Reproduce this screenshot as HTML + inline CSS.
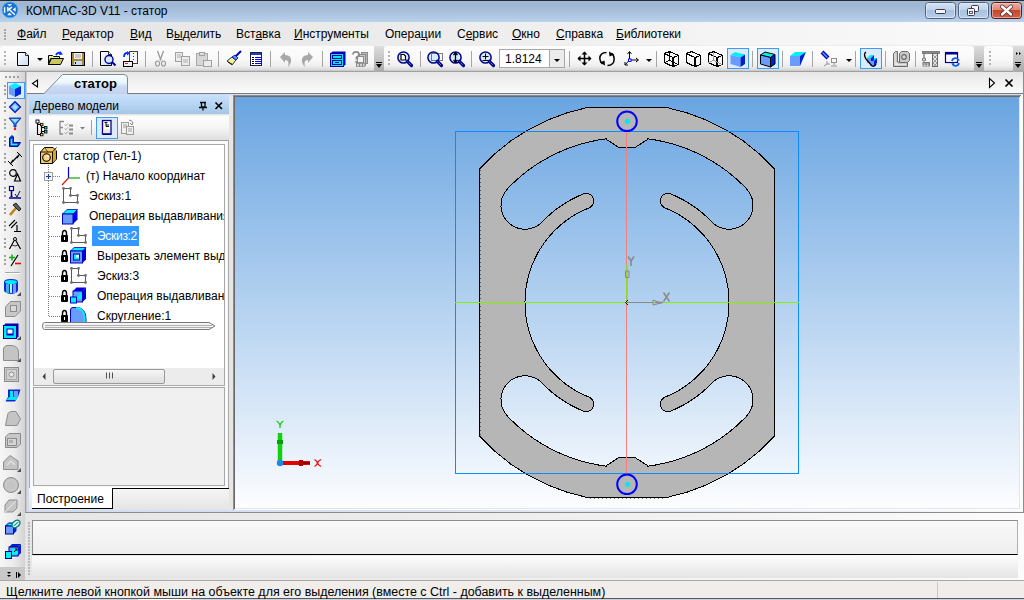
<!DOCTYPE html><html><head><meta charset="utf-8"><style>
*{margin:0;padding:0;box-sizing:border-box}
html,body{width:1024px;height:600px;overflow:hidden;background:#f0f0f0;font-family:"Liberation Sans",sans-serif;font-size:12px;color:#000}
.a{position:absolute}
.t{position:absolute;white-space:nowrap;line-height:14px}
.u{text-decoration:underline;text-underline-offset:1px}
.tb{position:absolute;top:46px;height:25px;border-radius:4px 4px 0 0;background:linear-gradient(#fdfdfd,#f9f9f9 50%,#eeeeee 80%,#d8d8d8 96%,#c0c0c0)}
.sep{position:absolute;top:51px;width:2px;height:17px;border-left:1px solid #a8a8a8;border-right:1px solid #fff}
svg{position:absolute;overflow:visible}
</style></head><body>
<div class="a" style="left:0;top:0;width:1024px;height:22px;background:linear-gradient(#2b2b2b 0,#2b2b2b 1px,#a2bad7 1px,#9db6d4 5px,#a9c1dd 12px,#b8d0ea 21px,#bcd3ec 22px)"></div>
<div class="t" style="left:26px;top:4px;font-size:12px;color:#000">КОМПАС-3D V11 - статор</div>
<svg style="left:0;top:0" width="1024" height="22"><defs><linearGradient id="wb" x1="0" y1="0" x2="0" y2="1"><stop offset="0" stop-color="#d4e3f4"/><stop offset=".45" stop-color="#c0d4ec"/><stop offset=".5" stop-color="#a9c1de"/><stop offset="1" stop-color="#b9cfe8"/></linearGradient><linearGradient id="wc" x1="0" y1="0" x2="0" y2="1"><stop offset="0" stop-color="#eab0a4"/><stop offset=".45" stop-color="#dc8876"/><stop offset=".5" stop-color="#c8452c"/><stop offset="1" stop-color="#d0674f"/></linearGradient><radialGradient id="lg" cx=".4" cy=".35" r=".7"><stop offset="0" stop-color="#7cc0f4"/><stop offset="1" stop-color="#1a66c4"/></radialGradient></defs><circle cx="10" cy="9.9" r="7.9" fill="#1a72d0" stroke="#40b0f0" stroke-width=".8"/><path d="M7.2,4.3 H12.2 L9.7,6.2z M12.8,9.4 L15.6,7.2 V11.8z M7.2,15.2 H11.9 L9.5,12.6z" fill="#fff"/><path d="M4.6,7.3 V12.8 M7.8,7 V11.6 M8.4,9.6 L12,7.2 M9.3,9.6 L14.8,14.8" stroke="#fff" stroke-width="1.4" fill="none"/><rect x="925.5" y="2.5" width="30" height="16" rx="3" fill="url(#wb)" stroke="#52627a"/><rect x="926.5" y="3.5" width="28" height="14" rx="2" fill="none" stroke="#e6eef8" stroke-opacity=".7"/><rect x="935.5" y="9.5" width="10" height="4" rx="1" fill="#f4f4f4" stroke="#3a3a4a"/><rect x="958.5" y="2.5" width="30" height="16" rx="3" fill="url(#wb)" stroke="#52627a"/><rect x="959.5" y="3.5" width="28" height="14" rx="2" fill="none" stroke="#e6eef8" stroke-opacity=".7"/><rect x="971.5" y="5.5" width="7" height="6" rx="1" fill="#f4f4f4" stroke="#3a3a4a"/><rect x="967.5" y="8.5" width="7" height="7" rx="1" fill="#f4f4f4" stroke="#3a3a4a"/><rect x="969.5" y="11.5" width="3" height="2" fill="none" stroke="#3a3a4a" stroke-width=".8"/><rect x="991.5" y="2.5" width="30" height="16" rx="3" fill="url(#wc)" stroke="#5a1a1a"/><rect x="992.5" y="3.5" width="28" height="14" rx="2" fill="none" stroke="#f4d0c8" stroke-opacity=".6"/><path d="M1002,6.5 L1011,14.5 M1011,6.5 L1002,14.5" stroke="#4a3030" stroke-width="4" stroke-linecap="round"/><path d="M1002,6.5 L1011,14.5 M1011,6.5 L1002,14.5" stroke="#fff" stroke-width="2.4" stroke-linecap="round"/></svg>
<div class="a" style="left:0;top:22px;width:1024px;height:23px;background:linear-gradient(90deg,#e5e5e5,#ececec 40%,#f6f6f6 80%,#fafafa)"></div>
<svg style="left:0;top:0" width="20" height="45"><rect x="4" y="29" width="2" height="2" fill="#a8a8a8"/><rect x="4" y="32" width="2" height="2" fill="#a8a8a8"/><rect x="4" y="35" width="2" height="2" fill="#a8a8a8"/><rect x="4" y="38" width="2" height="2" fill="#a8a8a8"/></svg>
<div class="t" style="left:17px;top:27px"><span class="u">Ф</span>айл</div>
<div class="t" style="left:62px;top:27px"><span class="u">Р</span>едактор</div>
<div class="t" style="left:130px;top:27px"><span class="u">В</span>ид</div>
<div class="t" style="left:166px;top:27px">В<span class="u">ы</span>делить</div>
<div class="t" style="left:236px;top:27px">Вст<span class="u">а</span>вка</div>
<div class="t" style="left:294px;top:27px"><span class="u">И</span>нструменты</div>
<div class="t" style="left:385px;top:27px">Опера<span class="u">ц</span>ии</div>
<div class="t" style="left:457px;top:27px">С<span class="u">е</span>рвис</div>
<div class="t" style="left:512px;top:27px"><span class="u">О</span>кно</div>
<div class="t" style="left:556px;top:27px"><span class="u">С</span>правка</div>
<div class="t" style="left:616px;top:27px"><span class="u">Б</span>иблиотеки</div>
<div class="a" style="left:0;top:45px;width:1024px;height:27px;background:#ededed"></div>
<div class="tb" style="left:0;width:384px"></div>
<div class="tb" style="left:384px;width:590px"></div>
<div class="tb" style="left:984px;width:29px"></div>
<div class="a" style="left:0;top:71px;width:1024px;height:1px;background:#a0a0a0"></div>
<svg style="left:0;top:0" width="1024" height="80"><defs><linearGradient id="chev" x1="0" y1="0" x2="0" y2="1"><stop offset="0" stop-color="#dedede"/><stop offset="1" stop-color="#a9a9a9"/></linearGradient><linearGradient id="pg" x1="0" y1="0" x2="1" y2="1"><stop offset="0" stop-color="#ffffff"/><stop offset="1" stop-color="#c8dcf4"/></linearGradient></defs><rect x="4" y="51" width="2" height="2" fill="#b4b4b4"/><rect x="4" y="55" width="2" height="2" fill="#b4b4b4"/><rect x="4" y="59" width="2" height="2" fill="#b4b4b4"/><rect x="4" y="63" width="2" height="2" fill="#b4b4b4"/><g transform="translate(17,52)"><path d="M0.5,0.5 H8.5 L11.5,3.5 V13.5 H0.5Z" fill="url(#pg)" stroke="#000"/><path d="M8.5,0.5 V3.5 H11.5" fill="#fff" stroke="#000" stroke-width=".8"/></g><path d="M37,58 h6 l-3,3z" fill="#000"/><g transform="translate(48,51)"><path d="M0.5,4.5 h4 l1,1 h6 v2 h-9 l-2,6z" fill="#e8e8b0" stroke="#000"/><path d="M0.5,13.5 L3.5,7.5 H15.5 L12.5,13.5Z" fill="#c8c860" stroke="#000"/><path d="M8,4 Q10,0.5 13,2.5" fill="none" stroke="#0030ff" stroke-width="1.8"/><path d="M12,0 L15,3.5 L11,4z" fill="#0030ff"/></g><g transform="translate(71,52)"><rect x="0.5" y="0.5" width="13" height="13" fill="#a88838" stroke="#000"/><rect x="3" y="1" width="8" height="6" fill="#f2f2f2"/><path d="M4,3h6M4,5h6" stroke="#a0a0a0"/><rect x="3" y="9" width="8" height="4" fill="#c8dcf0"/><rect x="4" y="10" width="1" height="2" fill="#000"/></g><rect x="92" y="51" width="1" height="16" fill="#a6a6a6"/><g transform="translate(100,51)"><path d="M0.5,0.5 H8.5 L11.5,3.5 V14.5 H0.5Z" fill="url(#pg)" stroke="#000"/><path d="M8.5,0.5 V3.5 H11.5" fill="#fff" stroke="#000" stroke-width=".8"/><path d="M11.5,10.5 L15.5,14.5" stroke="#000090" stroke-width="2"/><circle cx="9" cy="8.5" r="4" fill="#d6ecfb" stroke="#000090" stroke-width="1.4"/></g><g transform="translate(122,51)"><rect x="7.5" y="0.5" width="8" height="12" fill="#f4f4f4" stroke="#404040"/><path d="M11.5,2v9" stroke="#404040" stroke-dasharray="1,2"/><path d="M2,6 Q2,1.5 6,2" fill="none" stroke="#0030ff" stroke-width="1.8"/><path d="M5,0 L8,2.2 L5,4.5z" fill="#0030ff"/><rect x="1.5" y="10.5" width="9" height="5" fill="#f0f0f0" stroke="#000"/><rect x="3" y="12" width="3" height="1" fill="#f02020"/></g><rect x="145" y="51" width="1" height="16" fill="#a6a6a6"/><g transform="translate(155,51)"><path d="M2.5,0 L6,9.5 M8.5,0 L5,9.5" stroke="#9a9a9a" stroke-width="1.3"/><ellipse cx="2.5" cy="12.5" rx="2" ry="2.5" fill="none" stroke="#9a9a9a" stroke-width="1.2"/><ellipse cx="8.5" cy="12.5" rx="2" ry="2.5" fill="none" stroke="#9a9a9a" stroke-width="1.2"/></g><g transform="translate(175,52)"><rect x="0.5" y="0.5" width="7" height="9" fill="#ececec" stroke="#a0a0a0"/><rect x="6.5" y="4.5" width="8" height="9" fill="#ececec" stroke="#a0a0a0"/><path d="M8,8h5M8,10h5M2,3h4M2,5h4" stroke="#b0b0b0"/></g><g transform="translate(196,52)"><rect x="0.5" y="1.5" width="11" height="12" fill="#d6d6d6" stroke="#a8a8a8"/><rect x="3.5" y="0.5" width="5" height="3" fill="#e0e0e0" stroke="#a0a0a0"/><rect x="7.5" y="8.5" width="8" height="6" fill="#ececec" stroke="#a0a0a0"/></g><rect x="218" y="51" width="1" height="16" fill="#a6a6a6"/><g transform="translate(226,51)"><path d="M9,6 L15,0" stroke="#0000c0" stroke-width="2"/><path d="M1,10 L6,6 L10,9 L6,14z" fill="#f4f0a0" stroke="#000" stroke-width=".8"/><path d="M6,6 L9,4 L12,7 L10,9z" fill="#40a0f0" stroke="#0000a0" stroke-width=".8"/><path d="M2,11 L6,13" stroke="#000" stroke-width=".8"/></g><g transform="translate(250,52)"><rect x="0.5" y="0.5" width="11" height="13" fill="#fff" stroke="#202040"/><rect x="1" y="1" width="10" height="2" fill="#1a40c0"/><path d="M2,5.5h2M2,7.5h2M2,9.5h2M2,11.5h2" stroke="#000"/><path d="M5,5.5h6M5,7.5h6M5,9.5h6M5,11.5h6" stroke="#0000f0"/></g><rect x="270" y="51" width="1" height="16" fill="#a6a6a6"/><g transform="translate(280,52)"><path d="M0,5 L5,0 V3 Q12,3 11,10 Q10,13 8,15 Q10,8 5,8 V11z" fill="#a8a8a8"/></g><g transform="translate(300,52)"><path d="M13,5 L8,0 V3 Q1,3 2,10 Q3,13 5,15 Q3,8 8,8 V11z" fill="#a8a8a8"/></g><rect x="322" y="51" width="1" height="16" fill="#a6a6a6"/><g transform="translate(330,51)"><path d="M0.5,2.5 L2.5,0.5 H15.5 V13.5 L13.5,15.5 H0.5Z" fill="#0000c8"/><rect x="0.5" y="2.5" width="13" height="13" fill="#00e8f8" stroke="#0000a0"/><rect x="2.5" y="4.5" width="9" height="3" fill="#00e8f8" stroke="#0000a0"/><rect x="2.5" y="9.5" width="9" height="4" fill="#00e8f8" stroke="#0000a0"/><rect x="5" y="11" width="4" height="1" fill="#0000a0"/></g><g transform="translate(352,51)"><rect x="9.5" y="1.5" width="6" height="11" fill="#b8b8b8" stroke="#8c8c8c"/><rect x="7.5" y="3.5" width="6" height="11" fill="#c8c8c8" stroke="#8c8c8c"/><rect x="5.5" y="5.5" width="6" height="6" fill="#f4f4f4" stroke="#8c8c8c"/><path d="M1,3.5 Q1,0.8 4,0.8 Q7,0.8 7,3.3 Q7,5.3 4.5,6.3 V8.5" fill="none" stroke="#8c8c8c" stroke-width="1.8"/><circle cx="4.5" cy="11" r="1.3" fill="#8c8c8c"/><rect x="4" y="12" width="9" height="4" fill="#8c8c8c"/><path d="M5,13.3 h2 M8,13.3 h2 M11,13.3 h1.5 M5,14.8 h2 M8,14.8 h2 M11,14.8 h1.5" stroke="#f0f0f0" stroke-width=".9"/></g><rect x="374" y="46" width="10" height="26" fill="url(#chev)"/><rect x="376" y="62" width="6" height="1" fill="#000"/><path d="M376,64 h6 l-3,4z" fill="#000"/><rect x="388" y="51" width="2" height="2" fill="#b4b4b4"/><rect x="388" y="55" width="2" height="2" fill="#b4b4b4"/><rect x="388" y="59" width="2" height="2" fill="#b4b4b4"/><rect x="388" y="63" width="2" height="2" fill="#b4b4b4"/><g transform="translate(397,51)"><circle cx="6.5" cy="6.5" r="5.6" fill="#d6ecfb" stroke="#00008a" stroke-width="1.5"/><path d="M4,3.5 H7 L8.5,5 V9 H4Z" fill="#fff" stroke="#000" stroke-width="1.2"/><path d="M10.3,10.3 L14.5,14.5" stroke="#00008a" stroke-width="3.2" stroke-linecap="round"/><path d="M10.6,10.6 L14.2,14.2" stroke="#8aa0d8" stroke-width="1" stroke-dasharray="1,1"/></g><rect x="420" y="51" width="1" height="16" fill="#a6a6a6"/><g transform="translate(427,51)"><circle cx="6.5" cy="6.5" r="5.6" fill="#d6ecfb" stroke="#00008a" stroke-width="1.5"/><rect x="4.5" y="2.5" width="11" height="7" fill="none" stroke="#000" stroke-dasharray="1,1"/><path d="M10.3,10.3 L14.5,14.5" stroke="#00008a" stroke-width="3.2" stroke-linecap="round"/><path d="M10.6,10.6 L14.2,14.2" stroke="#8aa0d8" stroke-width="1" stroke-dasharray="1,1"/></g><g transform="translate(449,51)"><circle cx="6.5" cy="6.5" r="5.6" fill="#d6ecfb" stroke="#00008a" stroke-width="1.5"/><path d="M6.5,2 V11 M4.5,4 L6.5,1.8 L8.5,4 M4.5,9 L6.5,11.2 L8.5,9" fill="none" stroke="#000" stroke-width="1.3"/><path d="M10.3,10.3 L14.5,14.5" stroke="#00008a" stroke-width="3.2" stroke-linecap="round"/><path d="M10.6,10.6 L14.2,14.2" stroke="#8aa0d8" stroke-width="1" stroke-dasharray="1,1"/></g><rect x="471" y="51" width="1" height="16" fill="#a6a6a6"/><g transform="translate(479,51)"><circle cx="6.5" cy="6.5" r="5.6" fill="#d6ecfb" stroke="#00008a" stroke-width="1.5"/><path d="M3.5,5.5 H9.5 M6.5,2.5 V8.5 M3.5,9.5 H9.5" stroke="#000" stroke-width="1.1"/><path d="M10.3,10.3 L14.5,14.5" stroke="#00008a" stroke-width="3.2" stroke-linecap="round"/><path d="M10.6,10.6 L14.2,14.2" stroke="#8aa0d8" stroke-width="1" stroke-dasharray="1,1"/></g><rect x="499.5" y="49.5" width="65" height="18" fill="#fff" stroke="#a8a8a8"/><rect x="549.5" y="49.5" width="15" height="18" fill="#ececec" stroke="#a8a8a8"/><path d="M554,59 h6 l-3,3z" fill="#000"/><rect x="569" y="51" width="1" height="16" fill="#a6a6a6"/><g transform="translate(577,51)"><path d="M7.5,1 V14 M1,7.5 H14" stroke="#000" stroke-width="1.5"/><path d="M4.5,3.5 L7.5,0.5 L10.5,3.5z M4.5,11.5 L7.5,14.5 L10.5,11.5z M3.5,4.5 L0.5,7.5 L3.5,10.5z M11.5,4.5 L14.5,7.5 L11.5,10.5z" fill="#000"/></g><g transform="translate(599,51)"><path d="M7.5,1.5 Q1,1.5 0.8,7.5 Q1,11 3.5,13" fill="none" stroke="#000" stroke-width="1.5"/><path d="M0.8,11.5 L6,14.5 L5.5,9.5z" fill="#000"/><path d="M8.5,14.5 Q15,14.5 15.2,8 Q15,4 12.5,2.5" fill="none" stroke="#000" stroke-width="1.5"/><path d="M15.2,3.5 L10,0.5 L10.5,5.5z" fill="#000"/></g><g transform="translate(624,51)"><path d="M5.5,9 V1 M5.5,9 H14 M5.5,9 L1,14" stroke="#000" stroke-width="1"/><path d="M3.5,3 L5.5,0.5 L7.5,3 M12,7 L14.5,9 L12,11 M1,11 V14 H4" fill="none" stroke="#000"/><rect x="4.5" y="8" width="2.5" height="2.5" fill="#fff" stroke="#0000f0" stroke-width=".9"/></g><path d="M646,59 h6 l-3,3z" fill="#000"/><rect x="656" y="51" width="1" height="16" fill="#a6a6a6"/><g transform="translate(664,51)"><g shape-rendering="crispEdges"><path d="M0.5,2.5 L5.5,0.5 L14.5,4.5 V13.5 L9,15.5 L0.5,11.5Z" fill="none" stroke="#000" stroke-width="1.2"/><path d="M0.5,2.5 L9,6.5 L14.5,4.5 M9,6.5 V15.5" fill="none" stroke="#000" stroke-width="1.2"/><path d="M5.5,0.5 V9.5 L0.5,11.5 M5.5,9.5 L14.5,13.5" fill="none" stroke="#000" stroke-width="1"/></g></g><g transform="translate(686,51)"><g shape-rendering="crispEdges"><path d="M0.5,2.5 L5.5,0.5 L14.5,4.5 V13.5 L9,15.5 L0.5,11.5Z" fill="none" stroke="#000" stroke-width="1.2"/><path d="M0.5,2.5 L9,6.5 L14.5,4.5 M9,6.5 V15.5" fill="none" stroke="#000" stroke-width="1.2"/></g></g><g transform="translate(708,51)"><g shape-rendering="crispEdges"><path d="M0.5,2.5 L5.5,0.5 L14.5,4.5 V13.5 L9,15.5 L0.5,11.5Z" fill="none" stroke="#000" stroke-width="1.2"/><path d="M0.5,2.5 L9,6.5 L14.5,4.5 M9,6.5 V15.5" fill="none" stroke="#000" stroke-width="1.2"/><path d="M5.5,0.5 V9.5 L0.5,11.5 M5.5,9.5 L14.5,13.5" fill="none" stroke="#a0a0a0" stroke-width="1"/></g></g><rect x="727.5" y="48.5" width="21" height="20" fill="#dcebfc" stroke="#3d9bf5" stroke-width="1"/><g transform="translate(730,51)"><path d="M0.5,4 L5,1 L15,3.5 L10.5,6.5Z" fill="#00f0f8"/><path d="M0.5,4 L10.5,6.5 V16 L0.5,13Z" fill="#6a9cff"/><path d="M10.5,6.5 L15,3.5 V13 L10.5,16Z" fill="#0020d0"/></g><rect x="752" y="51" width="1" height="16" fill="#a6a6a6"/><rect x="757.5" y="48.5" width="21" height="20" fill="#dcebfc" stroke="#3d9bf5" stroke-width="1"/><g transform="translate(760,51)"><path d="M0.5,4 L5,1 L15,3.5 L10.5,6.5Z" fill="#00f0f8" stroke="#000"/><path d="M0.5,4 L10.5,6.5 V16 L0.5,13Z" fill="#6a9cff" stroke="#000"/><path d="M10.5,6.5 L15,3.5 V13 L10.5,16Z" fill="#0020d0" stroke="#000"/></g><rect x="782" y="51" width="1" height="16" fill="#a6a6a6"/><g transform="translate(790,51)"><path d="M0,5 L5,1 H16 L10,5z" fill="#00f0f8"/><rect x="0" y="5" width="10" height="10" fill="#6a9cff"/><path d="M10,5 L16,1 L10,15z" fill="#0020d0"/></g><rect x="812" y="51" width="1" height="16" fill="#a6a6a6"/><g transform="translate(821,51)"><path d="M1,1 L7,7" stroke="#0000b0" stroke-width="4"/><path d="M1.5,1.5 L6.5,6.5" stroke="#50a0ff" stroke-width="1.5"/><path d="M6,10 V13 L3,15 M6,13 H9" fill="none" stroke="#909090"/><rect x="10.5" y="7.5" width="5" height="4" fill="none" stroke="#909090"/><path d="M13,11.5 V14 M10,15 h6" stroke="#909090"/></g><path d="M846,59 h6 l-3,3z" fill="#000"/><rect x="855" y="51" width="1" height="16" fill="#a6a6a6"/><rect x="860.5" y="48.5" width="21" height="20" fill="#dcebfc" stroke="#3d9bf5" stroke-width="1"/><g transform="translate(863,51)"><path d="M4,7 L7,4 H11 L8,7z M7,10 L10,7 H14 L11,10z" fill="#00f0f8"/><path d="M4,7 H8 V12 H4z" fill="#6a9cff"/><path d="M8,7 L11,4 V9 L8,12z" fill="#0020d0"/><path d="M7,10 H11 V15 H7z" fill="#6a9cff"/><path d="M11,10 L14,7 V12 L11,15z" fill="#0020d0"/><path d="M3,1 Q0,3 3,8 L9,15 Q12,16 13,13" fill="none" stroke="#000" stroke-width="1.3"/></g><rect x="885" y="51" width="1" height="16" fill="#a6a6a6"/><g transform="translate(893,51)"><path d="M0.5,2.5 L2.5,0.5 H4.5 V11 H14.5 V15.5 H0.5z" fill="#c8c8c8" stroke="#6c6c6c"/><path d="M2,2.5 V13.5 H13" fill="none" stroke="#f0f0f0" stroke-width=".8"/><path d="M6.5,2.5 L8.5,0.5 H14.5 L16.5,2.5 V9.5 L14.5,11.5 H6.5z" fill="#c8c8c8" stroke="#6c6c6c"/><circle cx="11" cy="6" r="2.3" fill="#d8d8d8" stroke="#6c6c6c" stroke-width="1.2"/><circle cx="3.5" cy="13" r="1.6" fill="#e8e8e8"/></g><rect x="915" y="51" width="1" height="16" fill="#a6a6a6"/><g transform="translate(922,51)"><rect x="0.5" y="0.5" width="17" height="2" fill="#8a8a8a" stroke="#6c6c6c" stroke-width=".8"/><path d="M2,2.5 V7" stroke="#6c6c6c" stroke-width="1.2"/><circle cx="2" cy="8.5" r="1.5" fill="none" stroke="#6c6c6c" stroke-width="1.1"/><rect x="10.5" y="2.5" width="5" height="13" fill="#e8e8e8" stroke="#6c6c6c"/><path d="M11,4 L15,8 M15,4 L11,8 M11,8 L15,12 M15,8 L11,12 M11,12 L15,15.5 M15,12 L11,15.5" stroke="#7a7a7a" stroke-width=".7"/><rect x="0.5" y="11" width="7.5" height="4.5" fill="#7a7a7a"/><path d="M1.5,13 h2 M4.5,13 h2 M1.5,14.6 h2 M4.5,14.6 h2" stroke="#e8e8e8" stroke-width="1"/></g><g transform="translate(945,51)"><rect x="0.5" y="1.5" width="12" height="10" fill="#fff" stroke="#000090" stroke-width="1.2"/><rect x="0.5" y="1.5" width="12" height="2" fill="#000090"/><path d="M7,10 A3.5,3.5 0 0 1 13.5,9 M14,12 A3.5,3.5 0 0 1 7.5,13" fill="none" stroke="#1060f0" stroke-width="1.8"/><path d="M12,7 L15,9.5 L12,10z M9,15 L6,12.5 L9,12z" fill="#1060f0"/></g><rect x="974" y="46" width="10" height="26" fill="url(#chev)"/><rect x="976" y="62" width="6" height="1" fill="#000"/><path d="M976,64 h6 l-3,4z" fill="#000"/><rect x="989" y="51" width="2" height="2" fill="#b4b4b4"/><rect x="989" y="55" width="2" height="2" fill="#b4b4b4"/><rect x="989" y="59" width="2" height="2" fill="#b4b4b4"/><rect x="989" y="63" width="2" height="2" fill="#b4b4b4"/><rect x="1013" y="46" width="11" height="26" fill="url(#chev)"/><path d="M1016,52 l2,1.5 l-2,1.5z M1019,52 l2,1.5 l-2,1.5z" fill="#000"/><rect x="1015" y="62" width="6" height="1" fill="#000"/><path d="M1015,64 h6 l-3,4z" fill="#000"/></svg>
<div class="t" style="left:505px;top:52px">1.8124</div>
<div class="a" style="left:25px;top:72px;width:999px;height:441px;background:#e8e6e4"></div>
<div class="a" style="left:27px;top:72px;width:996px;height:21px;background:linear-gradient(#e6e6e6,#f2f2f2 55%,#fafafa)"></div>
<div class="a" style="left:27px;top:93px;width:996px;height:1px;background:#7c7c7c"></div>
<div class="a" style="left:27px;top:94px;width:996px;height:1px;background:#d0dcf4"></div>
<div class="a" style="left:25px;top:72px;width:1px;height:508px;background:#a4a4a4"></div>
<div class="a" style="left:26px;top:72px;width:1px;height:508px;background:#c8c8c8"></div>
<div class="a" style="left:27px;top:94px;width:2px;height:418px;background:#cddbf3"></div>
<div class="a" style="left:27px;top:510px;width:994px;height:2px;background:linear-gradient(90deg,#cddbf3,#dde6f4 50%,#f6f8fc)"></div>
<div class="a" style="left:25px;top:512px;width:999px;height:1px;background:#8c8c8c"></div>
<div class="a" style="left:1021px;top:94px;width:2px;height:418px;background:#fafafa"></div>
<div class="a" style="left:1023px;top:72px;width:1px;height:441px;background:#8c8c8c"></div>
<svg style="left:0;top:0" width="1024" height="100"><defs><linearGradient id="tg" x1="0" y1="0" x2="0" y2="1"><stop offset="0" stop-color="#f6fdff"/><stop offset="0.42" stop-color="#eaf6fd"/><stop offset="0.62" stop-color="#cbdaf2"/><stop offset="1" stop-color="#c3d1ee"/></linearGradient></defs><path d="M43.5,94 L62.5,74.5 L124,74.5 Q127.5,74.5 127.5,78 L127.5,94" fill="url(#tg)" stroke="#8a8a8a" stroke-width="1"/></svg>
<div class="t" style="left:74px;top:77px;font-size:13px;font-weight:bold">статор</div>
<svg style="left:0;top:0" width="1024" height="95"><path d="M37.5,80 V87 L32.5,83.5z" fill="#fff" stroke="#000" stroke-width="1.1" stroke-linejoin="miter"/><path d="M989.5,78.5 V87.5 L994.5,83z" fill="#fff" stroke="#000" stroke-width="1.1"/><path d="M1005.5,79.5 L1012.5,86.5 M1012.5,79.5 L1005.5,86.5" stroke="#000" stroke-width="1.7"/></svg>
<div class="a" style="left:29px;top:95px;width:200px;height:19px;background:linear-gradient(#c6e1fc,#b5d3f1 55%,#a7c6e6)"></div>
<div class="t" style="left:33px;top:99px">Дерево модели</div>
<div class="a" style="left:29px;top:114px;width:200px;height:26px;background:linear-gradient(#e4e4e4 0,#e4e4e4 1px,#fefefe 2px,#f6f6f6 50%,#e6e6e6 85%,#dedede)"></div>
<svg style="left:0;top:0" width="240" height="145"><path d="M200,102.5 H206 M201.5,102.5 V107 H205 V102.5 M199,107.5 H207 M203,108 V110.5" fill="none" stroke="#000" stroke-width="1.3"/><path d="M215.5,102.5 L222,109 M222,102.5 L215.5,109" stroke="#000" stroke-width="1.6"/><path d="M37.5,122 V134.5 H41.5 M37.5,124.5 H41.5 M41.5,125 V134 M41.5,127.5 H45 M41.5,131.5 H45" fill="none" stroke="#000" stroke-width="1.1"/><rect x="36" y="120" width="3" height="3" fill="#fff" stroke="#000" stroke-width=".9"/><rect x="40.5" y="123.3" width="2.5" height="2.5" fill="#f0e000" stroke="#000" stroke-width=".8"/><rect x="44.5" y="126.5" width="2.5" height="2.5" fill="#00d8e8" stroke="#000" stroke-width=".8"/><rect x="44.5" y="130.5" width="2.5" height="2.5" fill="#00d8e8" stroke="#000" stroke-width=".8"/><rect x="40.5" y="133.3" width="2.5" height="2.5" fill="#f0e000" stroke="#000" stroke-width=".8"/><path d="M60,121 V134.5 M59.5,121.5 H64 M59.5,127.5 H63 M59.5,134 H63" fill="none" stroke="#8a8a8a" stroke-width="1.3"/><path d="M64.5,124.5 l1.3,1.3 l2.2,-2.5 M64.5,128.5 l1.3,1.3 l2.2,-2.5 M64.5,132.5 l1.3,1.3 l2.2,-2.5" fill="none" stroke="#9a9a9a" stroke-width=".9"/><path d="M69,125.5 h4 M69,129.5 h4 M69,133.5 h4" stroke="#8a8a8a" stroke-width="1.8"/><path d="M80,127 h5 l-2.5,2.5z" fill="#808080"/><rect x="91" y="120" width="1" height="15" fill="#a0a0a0"/><rect x="96.5" y="117.5" width="21" height="21" fill="#dcebfc" stroke="#3d9bf5"/><rect x="102.5" y="120.5" width="8.5" height="13.5" fill="#fff" stroke="#000090" stroke-width="1.3"/><rect x="103.5" y="129.5" width="6.5" height="3.5" fill="#e8e8e0"/><path d="M102,133.5 H111.5 V135 H103z" fill="#000090"/><path d="M104.5,122.5 h3 M106,123 v3.5 H109 M106,125 h3" fill="none" stroke="#000" stroke-width=".9"/><rect x="121.5" y="122.5" width="7" height="11" fill="#f0f0f0" stroke="#9a9a9a"/><rect x="126.5" y="126.5" width="7" height="8" fill="#f0f0f0" stroke="#9a9a9a"/><path d="M123,125h4M123,127h3M128,129h4M128,131h4" stroke="#a0a0a0"/><path d="M129,120 q3,0 4,3 l-1,2 l-2,-2" fill="none" stroke="#8a8a8a"/></svg>
<div class="a" style="left:29px;top:140px;width:200px;height:349px;background:#f0f0f0;border:1px solid #a8a8a8;border-top-color:#a0a0a0"></div>
<div class="a" style="left:30px;top:141px;width:198px;height:347px;background:#fafafa"></div>
<div class="a" style="left:33px;top:144px;width:192px;height:242px;background:#fff;border:1px solid #a8a8a8"></div>
<div class="a" style="left:34px;top:368px;width:190px;height:17px;background:#ececec"></div>
<div class="a" style="left:53px;top:369px;width:112px;height:15px;border:1px solid #9a9a9a;border-radius:2px;background:linear-gradient(#f6f6f6,#dedede)"></div>
<div class="a" style="left:34px;top:145px;width:190px;height:177px;overflow:hidden"><svg style="left:-34px;top:-145px" width="260" height="340"><path d="M48.5,165 V316" stroke="#808080" stroke-dasharray="1,1"/><g transform="translate(40,147)"><path d="M0.5,5 L4.5,0.5 H13 L16.5,4 V12 L12.5,16.5 H0.5z" fill="#f4c860" stroke="#000"/><path d="M0.5,5 H12.5 V16.5 M12.5,5 L16.5,0.5" fill="none" stroke="#000" stroke-width=".9"/><path d="M4.5,0.5 L8,5" stroke="#000" stroke-width=".6"/><circle cx="6.5" cy="10.5" r="3.8" fill="#f8d890" stroke="#000" stroke-width="1.1"/><circle cx="8" cy="9" r="1" fill="#fff"/><path d="M13,5 L16,2 V12 L13,15z" fill="#e0a020"/></g><rect x="44.5" y="172.5" width="8" height="8" fill="#f4f4f4" stroke="#a0a0a0"/><path d="M46,176.5 H51 M48.5,174 V179" stroke="#1a3a8a" stroke-width="1.1"/><path d="M53,176.5 H61" stroke="#808080" stroke-dasharray="1,1"/><path d="M68.5,178 V167 " stroke="#0000f0" stroke-width="1.2"/><path d="M68.5,178 H80" stroke="#10a010" stroke-width="1.2"/><path d="M68.5,178 L62,185" stroke="#f01010" stroke-width="1.2"/><path d="M49,196.5 H61" stroke="#808080" stroke-dasharray="1,1"/><g transform="translate(62,187)"><path d="M1.5,1.5 L8.5,1.5 L8.5,8.5 L15.5,8.5 L15.5,15.5 L1.5,15.5Z" fill="none" stroke="#5a5a5a" stroke-width="1"/><circle cx="1.5" cy="1.5" r="1.4" fill="#707070"/><circle cx="8.5" cy="1.5" r="1.4" fill="#707070"/><circle cx="8.5" cy="8.5" r="1.4" fill="#707070"/><circle cx="15.5" cy="8.5" r="1.4" fill="#707070"/><circle cx="15.5" cy="15.5" r="1.4" fill="#707070"/><circle cx="1.5" cy="15.5" r="1.4" fill="#707070"/></g><path d="M49,216.5 H61" stroke="#808080" stroke-dasharray="1,1"/><g transform="translate(62,209)"><path d="M0.5,5 L5,0.5 H15.5 L11,5z" fill="#00f0f8" stroke="#0000c0" stroke-width=".8"/><rect x="0.5" y="5" width="10.5" height="10" fill="#6a9cff" stroke="#0000c0" stroke-width="1"/><path d="M11,5 L15.5,0.5 V10.5 L11,15z" fill="#0000e0"/></g><path d="M49,236.5 H61" stroke="#808080" stroke-dasharray="1,1"/><g transform="translate(61,230)"><path d="M1.5,5 V3.5 Q1.5,0.5 3.5,0.5 Q5.5,0.5 5.5,3.5 V5" fill="none" stroke="#000" stroke-width="1.4"/><rect x="0" y="5" width="7" height="7" rx="1" fill="#000"/><rect x="3" y="7" width="1" height="3" fill="#fff"/></g><path d="M49,256.5 H61" stroke="#808080" stroke-dasharray="1,1"/><g transform="translate(61,250)"><path d="M1.5,5 V3.5 Q1.5,0.5 3.5,0.5 Q5.5,0.5 5.5,3.5 V5" fill="none" stroke="#000" stroke-width="1.4"/><rect x="0" y="5" width="7" height="7" rx="1" fill="#000"/><rect x="3" y="7" width="1" height="3" fill="#fff"/></g><path d="M49,276.5 H61" stroke="#808080" stroke-dasharray="1,1"/><g transform="translate(61,270)"><path d="M1.5,5 V3.5 Q1.5,0.5 3.5,0.5 Q5.5,0.5 5.5,3.5 V5" fill="none" stroke="#000" stroke-width="1.4"/><rect x="0" y="5" width="7" height="7" rx="1" fill="#000"/><rect x="3" y="7" width="1" height="3" fill="#fff"/></g><path d="M49,296.5 H61" stroke="#808080" stroke-dasharray="1,1"/><g transform="translate(61,290)"><path d="M1.5,5 V3.5 Q1.5,0.5 3.5,0.5 Q5.5,0.5 5.5,3.5 V5" fill="none" stroke="#000" stroke-width="1.4"/><rect x="0" y="5" width="7" height="7" rx="1" fill="#000"/><rect x="3" y="7" width="1" height="3" fill="#fff"/></g><path d="M49,316.5 H61" stroke="#808080" stroke-dasharray="1,1"/><g transform="translate(61,310)"><path d="M1.5,5 V3.5 Q1.5,0.5 3.5,0.5 Q5.5,0.5 5.5,3.5 V5" fill="none" stroke="#000" stroke-width="1.4"/><rect x="0" y="5" width="7" height="7" rx="1" fill="#000"/><rect x="3" y="7" width="1" height="3" fill="#fff"/></g><g transform="translate(70,227)"><path d="M1.5,1.5 L8.5,1.5 L8.5,8.5 L15.5,8.5 L15.5,15.5 L1.5,15.5Z" fill="none" stroke="#5a5a5a" stroke-width="1"/><circle cx="1.5" cy="1.5" r="1.4" fill="#707070"/><circle cx="8.5" cy="1.5" r="1.4" fill="#707070"/><circle cx="8.5" cy="8.5" r="1.4" fill="#707070"/><circle cx="15.5" cy="8.5" r="1.4" fill="#707070"/><circle cx="15.5" cy="15.5" r="1.4" fill="#707070"/><circle cx="1.5" cy="15.5" r="1.4" fill="#707070"/></g><g transform="translate(70,247)"><path d="M0.5,4 L4,0.5 H16 L12.5,4z" fill="#00f0f8" stroke="#0000c0" stroke-width=".8"/><rect x="0.5" y="4" width="12" height="12" fill="#6a9cff" stroke="#0000c0"/><path d="M12.5,4 L16,0.5 V12.5 L12.5,16z" fill="#0000e0"/><rect x="3" y="6.5" width="7" height="7" fill="#0000c0"/><rect x="4" y="7.5" width="5" height="5" fill="#00f0f8"/><rect x="6" y="8" width="3" height="2.5" fill="#fff"/></g><g transform="translate(70,267)"><path d="M1.5,1.5 L8.5,1.5 L8.5,8.5 L15.5,8.5 L15.5,15.5 L1.5,15.5Z" fill="none" stroke="#5a5a5a" stroke-width="1"/><circle cx="1.5" cy="1.5" r="1.4" fill="#707070"/><circle cx="8.5" cy="1.5" r="1.4" fill="#707070"/><circle cx="8.5" cy="8.5" r="1.4" fill="#707070"/><circle cx="15.5" cy="8.5" r="1.4" fill="#707070"/><circle cx="15.5" cy="15.5" r="1.4" fill="#707070"/><circle cx="1.5" cy="15.5" r="1.4" fill="#707070"/></g><g transform="translate(70,287)"><path d="M3,4 L6.5,0.5 H16 L12.5,4z" fill="#0000e0"/><rect x="3" y="4" width="9.5" height="11" fill="#6a9cff" stroke="#0000c0"/><path d="M12.5,4 L16,0.5 V11.5 L12.5,15z" fill="#0000e0"/><rect x="5" y="6" width="7" height="6" fill="#00f0f8"/><path d="M3,9 L5.5,6.5 H10.5 L8,9z" fill="#6a9cff"/><rect x="0.5" y="10" width="6" height="6" fill="#00f0f8" stroke="#0000c0"/></g><g transform="translate(70,307)"><path d="M0.5,16 V3 Q0.5,0.5 3,0.5 H6 Q16,0.5 16,12 V16z" fill="#6a9cff" stroke="#0000c0"/><path d="M6,1 Q14,1.5 14.5,10 V16" fill="none" stroke="#00f0f8" stroke-width="2"/></g></svg><div class="t" style="left:29px;top:4px">статор (Тел-1)</div><div class="t" style="left:52px;top:24px">(т) Начало координат</div><div class="t" style="left:55px;top:44px">Эскиз:1</div><div class="t" style="left:55px;top:64px">Операция выдавливания</div><div class="t" style="left:63px;top:104px">Вырезать элемент выдавливания</div><div class="t" style="left:63px;top:124px">Эскиз:3</div><div class="t" style="left:63px;top:144px">Операция выдавливания</div><div class="t" style="left:63px;top:164px">Скругление:1</div><div class="a" style="left:58px;top:81px;width:47px;height:20px;background:#3399ff"></div><div class="t" style="left:63px;top:84px;color:#fff;letter-spacing:-0.3px">Эскиз:2</div></div>
<svg style="left:0;top:0" width="240" height="400"><path d="M44.5,322.5 H209 L215,326 L209,329.5 H44.5 Q42.5,329.5 42.5,326 Q42.5,322.5 44.5,322.5z" fill="#f4f4f4" stroke="#7a7a7a"/><path d="M45,325.5 H212 M45,327.5 H212" stroke="#a0a0a0" stroke-width=".8"/><path d="M42.5,376.5 L45.5,373 V380z M212.5,373 L215.5,376.5 L212.5,380z" fill="#404040"/><path d="M106.5,372.5 v6 M109.5,372.5 v6 M112.5,372.5 v6" stroke="#505050"/></svg>
<div class="a" style="left:33px;top:387px;width:192px;height:99px;background:#f0f0f0;border:1px solid #a8a8a8"></div>
<div class="a" style="left:29px;top:488px;width:200px;height:22px;background:linear-gradient(#f6f6f6,#e4e4e4)"></div>
<div class="a" style="left:112px;top:488px;width:117px;height:1px;background:#000"></div>
<div class="a" style="left:32px;top:488px;width:81px;height:21px;background:#fff;border-right:1px solid #000;border-bottom:1px solid #000"></div>
<div class="t" style="left:37px;top:492px">Построение</div>
<div class="a" style="left:233px;top:95px;width:788px;height:415px;background:#fff;border-left:1px solid #8c8c8c;border-top:1px solid #8c8c8c"></div>
<div class="a" style="left:234px;top:96px;width:786px;height:413px;background:#e4e4e4;border-left:1px solid #696969;border-top:1px solid #696969"></div>
<div class="a" style="left:235px;top:97px;width:784px;height:411px;background:linear-gradient(#6aa5e1,#fcfdff)"></div>
<svg style="left:0;top:0" width="1024" height="600" viewBox="0 0 1024 600"><path d="M774.5,436.1 L774.5,168.9 L774.5,168.9 L759.6,154.1 L743.2,140.9 L725.5,129.6 L706.7,120.2 L687.0,112.8 L666.7,107.5 L587.3,107.5 L567.0,112.8 L547.3,120.2 L528.5,129.6 L510.8,140.9 L494.4,154.1 L479.5,168.9 L479.5,436.1 L479.5,436.1 L494.4,450.9 L510.8,464.1 L528.5,475.4 L547.3,484.8 L567.0,492.2 L587.3,497.5 L666.7,497.5 L687.0,492.2 L706.7,484.8 L725.5,475.4 L743.2,464.1 L759.6,450.9 L774.5,436.1Z M729.0,302.5 L728.9,297.0 L728.4,291.5 L727.7,286.0 L726.6,280.6 L725.3,275.3 L723.7,270.0 L721.8,264.8 L719.6,259.8 L717.2,254.8 L714.5,250.0 L711.5,245.4 L708.3,240.9 L704.9,236.6 L701.2,232.5 L697.3,228.6 L693.2,224.9 L688.9,221.4 L684.5,218.2 L679.8,215.2 L675.0,212.5 L670.1,210.1 L665.0,207.9 L665.0,207.9 L663.7,207.1 L662.5,206.1 L661.5,204.9 L660.8,203.5 L660.4,202.0 L660.4,200.4 L660.6,198.8 L661.2,197.4 L662.1,196.1 L663.2,195.0 L664.5,194.2 L666.0,193.6 L667.6,193.4 L669.1,193.5 L670.6,193.9 L670.6,193.9 L676.4,196.4 L682.0,199.2 L687.4,202.3 L692.7,205.7 L697.8,209.3 L702.6,213.2 L707.3,217.4 L711.7,221.8 L711.7,221.8 L715.5,225.1 L720.0,227.5 L724.8,228.9 L729.8,229.3 L734.8,228.6 L739.5,226.9 L743.8,224.3 L747.4,220.8 L750.2,216.7 L752.1,212.0 L753.0,207.1 L752.9,202.1 L751.7,197.2 L749.5,192.7 L746.5,188.7 L746.5,188.7 L740.3,182.6 L733.9,176.8 L727.1,171.3 L720.1,166.2 L712.7,161.5 L705.2,157.2 L697.4,153.3 L689.5,149.8 L681.4,146.7 L673.1,144.1 L664.7,141.9 L656.2,140.1 L647.6,138.8 L647.5,139.5 L635.0,147.5 L619.0,147.5 L606.5,139.5 L606.4,138.8 L597.8,140.1 L589.3,141.9 L580.9,144.1 L572.6,146.7 L564.5,149.8 L556.6,153.3 L548.8,157.2 L541.3,161.5 L533.9,166.2 L526.9,171.3 L520.1,176.8 L513.7,182.6 L507.5,188.7 L507.5,188.7 L504.5,192.7 L502.3,197.2 L501.1,202.1 L501.0,207.1 L501.9,212.0 L503.8,216.7 L506.6,220.8 L510.2,224.3 L514.5,226.9 L519.2,228.6 L524.2,229.3 L529.2,228.9 L534.0,227.5 L538.5,225.1 L542.3,221.8 L542.3,221.8 L546.7,217.4 L551.4,213.2 L556.2,209.3 L561.3,205.7 L566.6,202.3 L572.0,199.2 L577.6,196.4 L583.4,193.9 L583.4,193.9 L584.9,193.5 L586.4,193.4 L588.0,193.6 L589.5,194.2 L590.8,195.0 L591.9,196.1 L592.8,197.4 L593.4,198.8 L593.6,200.4 L593.6,202.0 L593.2,203.5 L592.5,204.9 L591.5,206.1 L590.3,207.1 L589.0,207.9 L589.0,207.9 L583.9,210.1 L579.0,212.5 L574.2,215.2 L569.5,218.2 L565.1,221.4 L560.8,224.9 L556.7,228.6 L552.8,232.5 L549.1,236.6 L545.7,240.9 L542.5,245.4 L539.5,250.0 L536.8,254.8 L534.4,259.8 L532.2,264.8 L530.3,270.0 L528.7,275.3 L527.4,280.6 L526.3,286.0 L525.6,291.5 L525.1,297.0 L525.0,302.5 L525.0,302.5 L525.1,308.0 L525.6,313.5 L526.3,319.0 L527.4,324.4 L528.7,329.7 L530.3,335.0 L532.2,340.2 L534.4,345.2 L536.8,350.2 L539.5,355.0 L542.5,359.6 L545.7,364.1 L549.1,368.4 L552.8,372.5 L556.7,376.4 L560.8,380.1 L565.1,383.6 L569.5,386.8 L574.2,389.8 L579.0,392.5 L583.9,394.9 L589.0,397.1 L589.0,397.1 L590.3,397.9 L591.5,398.9 L592.5,400.1 L593.2,401.5 L593.6,403.0 L593.6,404.6 L593.4,406.2 L592.8,407.6 L591.9,408.9 L590.8,410.0 L589.5,410.8 L588.0,411.4 L586.4,411.6 L584.9,411.5 L583.4,411.1 L583.4,411.1 L577.6,408.6 L572.0,405.8 L566.6,402.7 L561.3,399.3 L556.2,395.7 L551.4,391.8 L546.7,387.6 L542.3,383.2 L542.3,383.2 L538.5,379.9 L534.0,377.5 L529.2,376.1 L524.2,375.7 L519.2,376.4 L514.5,378.1 L510.2,380.7 L506.6,384.2 L503.8,388.3 L501.9,393.0 L501.0,397.9 L501.1,402.9 L502.3,407.8 L504.5,412.3 L507.5,416.3 L507.5,416.3 L513.7,422.4 L520.1,428.2 L526.9,433.7 L533.9,438.8 L541.3,443.5 L548.8,447.8 L556.6,451.7 L564.5,455.2 L572.6,458.3 L580.9,460.9 L589.3,463.1 L597.8,464.9 L606.4,466.2 L606.5,465.5 L619.0,457.5 L635.0,457.5 L647.5,465.5 L647.6,466.2 L656.2,464.9 L664.7,463.1 L673.1,460.9 L681.4,458.3 L689.5,455.2 L697.4,451.7 L705.2,447.8 L712.7,443.5 L720.1,438.8 L727.1,433.7 L733.9,428.2 L740.3,422.4 L746.5,416.3 L746.5,416.3 L749.5,412.3 L751.7,407.8 L752.9,402.9 L753.0,397.9 L752.1,393.0 L750.2,388.3 L747.4,384.2 L743.8,380.7 L739.5,378.1 L734.8,376.4 L729.8,375.7 L724.8,376.1 L720.0,377.5 L715.5,379.9 L711.7,383.2 L711.7,383.2 L707.3,387.6 L702.6,391.8 L697.8,395.7 L692.7,399.3 L687.4,402.7 L682.0,405.8 L676.4,408.6 L670.6,411.1 L670.6,411.1 L669.1,411.5 L667.6,411.6 L666.0,411.4 L664.5,410.8 L663.2,410.0 L662.1,408.9 L661.2,407.6 L660.6,406.2 L660.4,404.6 L660.4,403.0 L660.8,401.5 L661.5,400.1 L662.5,398.9 L663.7,397.9 L665.0,397.1 L665.0,397.1 L670.1,394.9 L675.0,392.5 L679.8,389.8 L684.5,386.8 L688.9,383.6 L693.2,380.1 L697.3,376.4 L701.2,372.5 L704.9,368.4 L708.3,364.1 L711.5,359.6 L714.5,355.0 L717.2,350.2 L719.6,345.2 L721.8,340.2 L723.7,335.0 L725.3,329.7 L726.6,324.4 L727.7,319.0 L728.4,313.5 L728.9,308.0 L729.0,302.5Z" fill="#b6b6b6" fill-rule="evenodd" stroke="#000" stroke-width="1" shape-rendering="crispEdges"/><path d="M480.5,170 V435 M590,498.5 H665" stroke="#000" stroke-opacity=".5" stroke-dasharray="1,3" shape-rendering="crispEdges"/><rect x="455.5" y="131.5" width="343" height="342" fill="none" stroke="#0a8cff" stroke-width="1"/><line x1="455" y1="302.5" x2="799" y2="302.5" stroke="#80f000" stroke-width="1.1"/><line x1="626.5" y1="131" x2="626.5" y2="474" stroke="#f08080" stroke-width="1"/><path d="M627,302.5 V265" stroke="#78f000" stroke-width="1.4"/><path d="M627,302.5 H653 M653,300 V305 L661,303 L653,300z" fill="none" stroke="#8a8a8a" stroke-width="1"/><path d="M655,302.5 H663" stroke="#8a8a8a" stroke-width="1.5"/><path d="M625.5,277.5 V271 H629 V277.5z" fill="none" stroke="#8a8a8a" stroke-width="1"/><path d="M628,256.5 L631,261 L634,256.5 M631,261 V266" fill="none" stroke="#8a8a8a" stroke-width="1.6"/><path d="M663.5,292.5 L669.5,301.5 M669.5,292.5 L663.5,301.5" fill="none" stroke="#8a8a8a" stroke-width="1.5"/><path d="M628,300 L625.5,302.5 L628,305" fill="none" stroke="#000" stroke-width="1"/><path d="M280,463 V433" stroke="#10d010" stroke-width="4.5"/><path d="M277,444 V440 H283 V444z" fill="#08a008"/><path d="M280,463 H310" stroke="#e00000" stroke-width="4"/><path d="M299,460 H303 V466 H299z" fill="#b00000"/><path d="M303,462 H310 V464 H303z" fill="#900000"/><circle cx="280" cy="463" r="3.2" fill="#1a8ae8"/><path d="M276.5,421.5 Q278,421 280,425 V428 M283.5,421.5 Q282,421 280,425" fill="none" stroke="#10d010" stroke-width="1.3"/><path d="M314.5,459.5 Q317,461 317.5,463 Q318,465 321,466.5 M321,459.5 Q318,461 317.5,463 Q317,465 314.5,466.5" fill="none" stroke="#f01010" stroke-width="1.3"/><circle cx="627" cy="121.3" r="9.8" fill="none" stroke="#0000ff" stroke-width="2"/><circle cx="627.5" cy="121.3" r="2.6" fill="#00e8f0"/><circle cx="627" cy="484.3" r="9.8" fill="none" stroke="#0000ff" stroke-width="2"/><circle cx="627.5" cy="484.3" r="2.6" fill="#00e8f0"/></svg>
<svg style="left:0;top:0" width="30" height="600"><defs><linearGradient id="ltb" x1="0" y1="0" x2="1" y2="0"><stop offset="0" stop-color="#f6f6f6"/><stop offset=".55" stop-color="#ebebeb"/><stop offset="1" stop-color="#d3d3d3"/></linearGradient></defs><rect x="0" y="72" width="25" height="495" fill="url(#ltb)"/><rect x="0" y="567" width="25" height="13" fill="#c8c8c8"/><path d="M7,572 h4 l-2,2z M7,575 h4 l-2,2z" fill="#000"/><rect x="16" y="572" width="1" height="6" fill="#000"/><path d="M18,572 l3,3 l-3,3z" fill="#000"/><rect x="5" y="76" width="2" height="2" fill="#a0a0a0"/><rect x="9" y="76" width="2" height="2" fill="#a0a0a0"/><rect x="13" y="76" width="2" height="2" fill="#a0a0a0"/><rect x="17" y="76" width="2" height="2" fill="#a0a0a0"/><rect x="4" y="85" width="2" height="2" fill="#a0a0a0"/><rect x="4" y="89" width="2" height="2" fill="#a0a0a0"/><rect x="4" y="93" width="2" height="2" fill="#a0a0a0"/><rect x="4" y="102" width="2" height="2" fill="#a0a0a0"/><rect x="4" y="106" width="2" height="2" fill="#a0a0a0"/><rect x="4" y="110" width="2" height="2" fill="#a0a0a0"/><rect x="4" y="119" width="2" height="2" fill="#a0a0a0"/><rect x="4" y="123" width="2" height="2" fill="#a0a0a0"/><rect x="4" y="127" width="2" height="2" fill="#a0a0a0"/><rect x="4" y="136" width="2" height="2" fill="#a0a0a0"/><rect x="4" y="140" width="2" height="2" fill="#a0a0a0"/><rect x="4" y="144" width="2" height="2" fill="#a0a0a0"/><rect x="4" y="153" width="2" height="2" fill="#a0a0a0"/><rect x="4" y="157" width="2" height="2" fill="#a0a0a0"/><rect x="4" y="161" width="2" height="2" fill="#a0a0a0"/><rect x="4" y="170" width="2" height="2" fill="#a0a0a0"/><rect x="4" y="174" width="2" height="2" fill="#a0a0a0"/><rect x="4" y="178" width="2" height="2" fill="#a0a0a0"/><rect x="4" y="187" width="2" height="2" fill="#a0a0a0"/><rect x="4" y="191" width="2" height="2" fill="#a0a0a0"/><rect x="4" y="195" width="2" height="2" fill="#a0a0a0"/><rect x="4" y="204" width="2" height="2" fill="#a0a0a0"/><rect x="4" y="208" width="2" height="2" fill="#a0a0a0"/><rect x="4" y="212" width="2" height="2" fill="#a0a0a0"/><rect x="4" y="221" width="2" height="2" fill="#a0a0a0"/><rect x="4" y="225" width="2" height="2" fill="#a0a0a0"/><rect x="4" y="229" width="2" height="2" fill="#a0a0a0"/><rect x="4" y="238" width="2" height="2" fill="#a0a0a0"/><rect x="4" y="242" width="2" height="2" fill="#a0a0a0"/><rect x="4" y="246" width="2" height="2" fill="#a0a0a0"/><rect x="4" y="255" width="2" height="2" fill="#a0a0a0"/><rect x="4" y="259" width="2" height="2" fill="#a0a0a0"/><rect x="4" y="263" width="2" height="2" fill="#a0a0a0"/><rect x="7.5" y="82.5" width="17" height="16" fill="#dcebfc" stroke="#3d9bf5"/><g transform="translate(9,83)"><path d="M0,3 L6,0 L12,3 L6,6z" fill="#00f0f8"/><path d="M0,3 L6,6 V14 L0,11z" fill="#6a9cff"/><path d="M6,6 L12,3 V11 L6,14z" fill="#0028d8"/></g><g transform="translate(9,101)"><path d="M0.5,6 L6,0.5 L9,3.5 L11.5,6 L6,11.5z" fill="#5aa8f8" stroke="#0010b0" stroke-width="1.1"/><path d="M3,6 L6,3 L9,6 L6,9z" fill="#a8e0ff"/></g><g transform="translate(9,118)"><path d="M0,0 H12 L7,6 V9 H5 V6z" fill="#1a8ae8" stroke="#0010a0" stroke-width=".8"/><path d="M2,1 H10 L6,5z" fill="#90e0ff"/><circle cx="6" cy="11" r="1.3" fill="#e02020"/></g><g transform="translate(9,135)"><path d="M0.5,3 L3,0.5 L4.5,2 V7.5 H11.5 L9,11.5 H0.5z" fill="#0a3ce0" stroke="#00108a"/><path d="M2.5,4 V9.5 H8.5" fill="none" stroke="#30e8ff" stroke-width="1.5"/></g><g transform="translate(9,152)"><path d="M1,12 L11,2" stroke="#000" stroke-width="1.2"/><path d="M-1,9 L4,14 M8,0 L13,5" stroke="#000"/><path d="M2,10 l3,-1 l-1.5,-1.5z M10,4 l-3,1 l1.5,1.5z" fill="#000"/></g><g transform="translate(9,169)"><circle cx="4" cy="4" r="3.3" fill="none" stroke="#000" stroke-width="1.2"/><path d="M5.5,12 L8.5,5 L11.5,12z" fill="none" stroke="#000" stroke-width="1.2"/></g><g transform="translate(9,186)"><rect x="0.5" y="0.5" width="4" height="4" fill="#fff" stroke="#000090" stroke-width="1.2"/><path d="M2.5,5 V10 M0,12 H12" stroke="#000090" stroke-width="1.5"/><path d="M1,11 L2.5,9 L4,11z" fill="#000090"/><path d="M6,8 L8,11 L11,5" fill="none" stroke="#000" stroke-width=".9"/></g><g transform="translate(9,203)"><path d="M1,12 L7,5" stroke="#c08018" stroke-width="2.6"/><path d="M4,2 L7,0 L12,6 L10,8z" fill="#606060" stroke="#000" stroke-width=".8"/></g><g transform="translate(9,220)"><path d="M0,6 L6,0 M2,8 L8,2" stroke="#000" stroke-width="1.1"/><path d="M8,5 V11 M5,11.5 H12" stroke="#000" stroke-width="1.2"/></g><g transform="translate(9,237)"><path d="M0.5,12 L6,2 L11.5,12" fill="none" stroke="#000" stroke-width="1.2"/><circle cx="6" cy="2" r="1.5" fill="#fff" stroke="#000"/><path d="M3,8 Q6,10 9,8" fill="none" stroke="#000" stroke-width=".8"/></g><g transform="translate(9,254)"><path d="M0,3.5 H6 M3,0.5 V6.5" stroke="#10b010" stroke-width="1.6"/><path d="M2,12 L9,1" stroke="#000" stroke-width="1.2"/><path d="M6,9.5 H12" stroke="#e01010" stroke-width="1.6"/></g><rect x="5" y="272" width="15" height="1" fill="#a8a8a8"/><rect x="5" y="273" width="15" height="1" fill="#fff"/><g transform="translate(3,279)"><path d="M1,3 Q1,0 8,0 Q15,0 15,3 V11 Q15,14 8,15 Q1,14 1,11z" fill="#0a2ad0"/><path d="M2,3 Q2,1 8,1 Q14,1 14,3 Q14,5 8,5 Q2,5 2,3z" fill="#00e8f8"/><rect x="3" y="5" width="3" height="9" fill="#3ab0f0"/><rect x="7" y="5" width="2" height="9" fill="#b0f0ff"/><rect x="10" y="5" width="3" height="9" fill="#6a9cff"/></g><path d="M17,296 h4 v-4z" fill="#505050"/><g transform="translate(5,301)"><path d="M0.5,6 L5.5,0.5 H15.5 V10 L10,15.5 H0.5z" fill="#c8c8c8" stroke="#8c8c8c"/><rect x="5.5" y="4.5" width="6" height="6" fill="#d8d8d8" stroke="#8c8c8c"/></g><g transform="translate(3,323)"><path d="M0.5,2.5 L2.5,0.5 H15.5 V13.5 L13.5,15.5 H0.5z" fill="#0000c0"/><rect x="0.5" y="2.5" width="13" height="13" fill="#00e8f8" stroke="#0000a0"/><rect x="3.5" y="5.5" width="7" height="7" fill="#0000c0"/><rect x="4.5" y="6.5" width="5" height="4" fill="#fff"/></g><path d="M17,340 h4 v-4z" fill="#505050"/><g transform="translate(3,345)"><path d="M0.5,15.5 V5 Q0.5,0.5 5,0.5 H8 Q15.5,0.5 15.5,8 V15.5z" fill="#c4c4c4" stroke="#8c8c8c"/></g><path d="M17,362 h4 v-4z" fill="#505050"/><g transform="translate(4,367)"><rect x="0.5" y="0.5" width="14" height="14" fill="#c8c8c8" stroke="#8a8a8a"/><rect x="2.5" y="2.5" width="10" height="10" fill="#d4d4d4" stroke="#aaaaaa"/><circle cx="7.5" cy="7.5" r="2.5" fill="#e8e8e8" stroke="#909090"/></g><g transform="translate(5,389)"><path d="M3,0.5 H15.5 L13,8 L10,12.5 H0.5 L3,8z" fill="#0a2ad0"/><rect x="5" y="2" width="3" height="7" fill="#00e8f8"/><rect x="9" y="2" width="4" height="6" fill="#6a9cff"/><path d="M1.5,11 H11 L13,8 H4z" fill="#00e8f8"/></g><g transform="translate(5,411)"><path d="M0.5,14.5 L3,2.5 Q4,0.5 7,0.5 H11 L15.5,8 L12,14.5z" fill="#c4c4c4" stroke="#8c8c8c"/></g><g transform="translate(5,433)"><path d="M0.5,4 L4,0.5 H15.5 V11 L12,14.5 H0.5z" fill="#c8c8c8" stroke="#8a8a8a"/><rect x="2.5" y="5.5" width="9" height="7" fill="#d4d4d4" stroke="#8c8c8c"/><rect x="4" y="7" width="4" height="3" fill="#b0b0b0"/></g><g transform="translate(3,455)"><path d="M0.5,7 L7,0.5 L15,6 V14.5 H0.5z" fill="#c4c4c4" stroke="#8c8c8c"/><path d="M4,10 L8,6 L12,10" fill="none" stroke="#e0e0e0" stroke-width="1.5"/></g><path d="M17,472 h4 v-4z" fill="#505050"/><g transform="translate(3,477)"><circle cx="8" cy="8" r="7.5" fill="#c4c4c4" stroke="#8c8c8c"/><circle cx="8" cy="8" r="5" fill="none" stroke="#d8d8d8" stroke-dasharray="1,1"/></g><path d="M17,494 h4 v-4z" fill="#505050"/><g transform="translate(3,499)"><path d="M2,6 L6,1 H14 V9 L10,13 H2z" fill="#c4c4c4" stroke="#8c8c8c"/><path d="M1,14 L13,2" stroke="#d8d8d8" stroke-width="1.5"/></g><path d="M17,516 h4 v-4z" fill="#505050"/><g transform="translate(5,521)"><path d="M0.5,5 L3.5,2 H11 L8,5z" fill="#00f0f8" stroke="#000090"/><rect x="0.5" y="5" width="8" height="8" fill="#6a9cff" stroke="#000090"/><path d="M8.5,5 L11.5,2 V10 L8.5,13z" fill="#0020d0"/><g transform="rotate(-40 11 3)"><ellipse cx="11" cy="3" rx="4.5" ry="3" fill="#fff" stroke="#008080" stroke-width="1.5"/><path d="M8,3 h6" stroke="#00a0a0" stroke-width="1.2"/></g></g><g transform="translate(5,543)"><path d="M4,4 L7,1 H16 L13,4z" fill="#0020d0"/><rect x="4" y="4" width="9" height="9" fill="#6a9cff" stroke="#000090"/><path d="M13,4 L16,1 V10 L13,13z" fill="#0020d0"/><rect x="7" y="5.5" width="6" height="6" fill="#00f0f8"/><rect x="0.5" y="8.5" width="6" height="7" fill="#00f0f8" stroke="#000090"/><path d="M9,9 L12,6 M10,6 H12 V8" fill="none" stroke="#000"/></g></svg>
<div class="a" style="left:25px;top:513px;width:999px;height:67px;background:linear-gradient(90deg,#e6e6e6,#ececec 40%,#f6f6f6 80%,#fbfbfb)"></div>
<div class="a" style="left:32px;top:520px;width:986px;height:35px;background:linear-gradient(#f9f9f9,#eeeeee);border:1px solid #8c8c8c;border-bottom:1px solid #000;border-right-color:#b0b0b0"></div>
<div class="a" style="left:32px;top:556px;width:986px;height:22px;background:linear-gradient(#fdfdfd,#e4e4e4)"></div>
<svg style="left:0;top:0" width="40" height="600"><rect x="28" y="522" width="2" height="2" fill="#b8b8b8"/><rect x="28" y="525" width="2" height="2" fill="#b8b8b8"/><rect x="28" y="528" width="2" height="2" fill="#b8b8b8"/><rect x="28" y="531" width="2" height="2" fill="#b8b8b8"/><rect x="28" y="534" width="2" height="2" fill="#b8b8b8"/><rect x="28" y="537" width="2" height="2" fill="#b8b8b8"/><rect x="28" y="540" width="2" height="2" fill="#b8b8b8"/><rect x="28" y="543" width="2" height="2" fill="#b8b8b8"/><rect x="28" y="546" width="2" height="2" fill="#b8b8b8"/><rect x="28" y="549" width="2" height="2" fill="#b8b8b8"/><rect x="28" y="552" width="2" height="2" fill="#b8b8b8"/><rect x="28" y="555" width="2" height="2" fill="#b8b8b8"/><rect x="28" y="558" width="2" height="2" fill="#b8b8b8"/><rect x="28" y="561" width="2" height="2" fill="#b8b8b8"/><rect x="28" y="564" width="2" height="2" fill="#b8b8b8"/><rect x="28" y="567" width="2" height="2" fill="#b8b8b8"/><rect x="28" y="570" width="2" height="2" fill="#b8b8b8"/><rect x="28" y="573" width="2" height="2" fill="#b8b8b8"/></svg>
<div class="a" style="left:0;top:580px;width:1024px;height:20px;background:#f0edeb;border-top:1px solid #a8a8a8"></div>
<div class="a" style="left:937px;top:582px;width:1px;height:16px;background:#c8c8c8"></div>
<div class="a" style="left:0;top:598px;width:1024px;height:1px;background:#5a5a5a"></div>
<div class="a" style="left:0;top:599px;width:1024px;height:1px;background:#c4d4e8"></div>
<div class="a" style="left:138px;top:599px;width:53px;height:1px;background:#fff"></div>
<div class="t" style="left:6px;top:585px;font-size:12.45px">Щелкните левой кнопкой мыши на объекте для его выделения (вместе с Ctrl - добавить к выделенным)</div>
</body></html>
